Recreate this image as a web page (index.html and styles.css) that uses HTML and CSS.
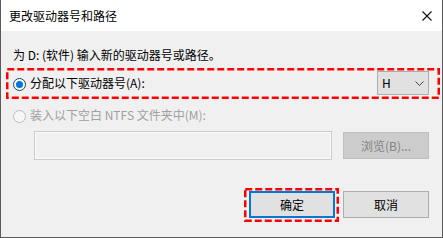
FILE: index.html
```html
<!DOCTYPE html>
<html lang="zh-CN">
<head>
<meta charset="utf-8">
<title>更改驱动器号和路径</title>
<link rel="stylesheet" href="styles.css">
</head>
<body>
<div class="window">
  <div class="titlebar">
    <span class="title">更改驱动器号和路径</span>
    <svg class="close" width="10" height="10" viewBox="0 0 10 10"><path d="M0.5 0.5L9.5 9.5M9.5 0.5L0.5 9.5" stroke="#111" stroke-width="1.1" fill="none"/></svg>
  </div>
  <div class="content">
    <div class="intro">为 D: (软件) 输入新的驱动器号或路径。</div>
    <div class="row row-assign">
      <label class="option">
        <span class="radio checked"></span>
        <span class="label">分配以下驱动器号(A):</span>
      </label>
      <div class="select">
        <span class="select-value">H</span>
        <svg class="chev" width="9" height="5" viewBox="0 0 9 5"><path d="M0.5 0.5L4.5 4.5L8.5 0.5" stroke="#444" stroke-width="1" fill="none"/></svg>
      </div>
    </div>
    <div class="row row-mount">
      <label class="option disabled">
        <span class="radio"></span>
        <span class="label">装入以下空白 NTFS 文件夹中(M):</span>
      </label>
    </div>
    <div class="row row-path">
      <div class="path-input"></div>
      <div class="btn btn-disabled">浏览(B)...</div>
    </div>
    <div class="actions">
      <div class="btn btn-default">确定</div>
      <div class="btn">取消</div>
    </div>
  </div>
  <svg class="mark mark-assign" width="434" height="31" viewBox="0 0 434 31"><rect x="1.25" y="1.25" width="431.5" height="28.5" fill="none" stroke="#f00" stroke-width="2.5" stroke-dasharray="7 3"/></svg>
  <svg class="mark mark-ok" width="95" height="34" viewBox="0 0 95 34"><rect x="1.25" y="1.25" width="92.5" height="31.5" fill="none" stroke="#f00" stroke-width="2.5" stroke-dasharray="7 3"/></svg>
</div>
</body>
</html>
```
FILE: styles.css
```css
html, body {
  margin: 0;
  padding: 0;
  background: #f0f0f0;
}
body {
  font-family: "Noto Sans CJK SC", "Noto Sans", sans-serif;
  font-size: 12px;
  color: #000;
}
.window {
  position: relative;
  width: 443px;
  height: 238px;
  box-sizing: border-box;
  border: 1px solid #5a5a5a;
  border-top: none;
  background: #f0f0f0;
  display: flex;
  flex-direction: column;
}
.titlebar {
  height: 31px;
  background: #fff;
  display: flex;
  align-items: center;
  justify-content: space-between;
  padding: 0 9px 0 8px;
  flex: none;
}
.title {
  font-size: 12px;
  line-height: 16px;
  color: #000;
}
.close {
  display: block;
  margin-right: 1px;
}
.content {
  padding: 16px 13px 0 12px;
  display: flex;
  flex-direction: column;
}
.intro {
  line-height: 16px;
  height: 16px;
}
.row {
  display: flex;
  align-items: center;
}
.row-assign {
  margin-top: 8px;
  height: 24px;
  justify-content: space-between;
}
.option {
  display: flex;
  align-items: center;
  gap: 4px;
  line-height: 16px;
}
.radio {
  width: 13px;
  height: 13px;
  box-sizing: border-box;
  border: 1px solid #333;
  border-radius: 50%;
  background: #fff;
  display: flex;
  align-items: center;
  justify-content: center;
  margin-top: 2px;
}
.radio.checked {
  border-color: #1c3f66;
}
.radio.checked::after {
  content: "";
  width: 7px;
  height: 7px;
  border-radius: 50%;
  background: #0078d7;
}
.option.disabled {
  color: #a0a0a0;
}
.option.disabled .radio {
  border-color: #bcbcbc;
  background: #f7f7f7;
}
.select {
  width: 52px;
  height: 24px;
  box-sizing: border-box;
  border: 1px solid #adadad;
  background: #e1e1e1;
  display: flex;
  align-items: center;
  justify-content: space-between;
  padding: 0 4px 0 4px;
}
.select-value {
  line-height: 16px;
  font-size: 12px;
  color: #000;
}
.chev {
  display: block;
}
.row-mount {
  margin-top: 12px;
  height: 16px;
}
.row-path {
  margin-top: 8px;
  padding-left: 21px;
  gap: 11px;
}
.path-input {
  width: 298px;
  height: 29px;
  box-sizing: border-box;
  border: 1px solid #cccccc;
  box-shadow: inset 0 0 0 1px #fafafa;
  background: #f0f0f0;
}
.btn {
  width: 86px;
  height: 27px;
  box-sizing: border-box;
  border: 1px solid #adadad;
  background: #e1e1e1;
  display: flex;
  align-items: center;
  justify-content: center;
  line-height: 16px;
  color: #000;
}
.btn-disabled {
  background: #cccccc;
  border-color: #bfbfbf;
  color: #838383;
}
.actions {
  margin-top: 31px;
  display: flex;
  justify-content: flex-end;
  gap: 8px;
}
.btn-default {
  border: 2px solid #0078d7;
}
.mark {
  position: absolute;
  display: block;
}
.mark-assign {
  left: 5px;
  top: 68px;
}
.mark-ok {
  left: 243px;
  top: 188px;
}
```
